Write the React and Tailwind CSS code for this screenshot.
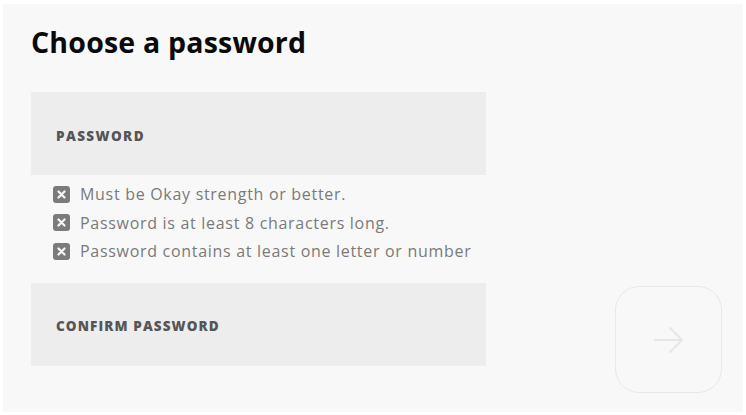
import React from "react";

function XBox() {
  return (
    <span className="flex h-[17px] w-[17px] shrink-0 items-center justify-center rounded-[3px] bg-[#7b7b7b]">
      <svg width="9" height="9" viewBox="0 0 9 9">
        <path d="M1.5 1.5 L7.5 7.5 M7.5 1.5 L1.5 7.5" stroke="#f8f8f8" strokeWidth="2.2" strokeLinecap="round" />
      </svg>
    </span>
  );
}

const rules = [
  "Must be Okay strength or better.",
  "Password is at least 8 characters long.",
  "Password contains at least one letter or number",
];

export default function App() {
  return (
    <div className="h-[415px] w-[746px] bg-white pl-[3px] pt-[4px]" style={{ fontFamily: "'Open Sans', Lato, sans-serif" }}>
      <div className="flex h-[408px] w-[740px] bg-[#f8f8f8]">
        <div className="flex w-[483px] flex-col pl-[28px] pt-[20px]">
          <h1 className="text-[28.5px] font-bold leading-[36px] tracking-[0.2px] text-[#0a0a0a]">Choose a password</h1>
          <div className="mt-[32px] flex h-[83px] w-[455px] items-center bg-[#ededed] px-[25px] pt-[5px]">
            <span className="text-[13.5px] font-extrabold tracking-[1.4px] text-[#555]">PASSWORD</span>
          </div>
          <ul className="mt-[5px] flex flex-col pl-[22px]">
            {rules.map((r) => (
              <li key={r} className="flex h-[28.5px] items-center gap-[10px]">
                <XBox />
                <span className="text-[16px] leading-[20px] tracking-[0.7px] text-[#7a7a7a]">{r}</span>
              </li>
            ))}
          </ul>
          <div className="mt-[17px] flex h-[83px] w-[455px] items-center bg-[#ededed] px-[25px] pt-[5px]">
            <span className="text-[13.5px] font-extrabold tracking-[1.1px] text-[#555]">CONFIRM PASSWORD</span>
          </div>
        </div>
        <div className="flex flex-1 flex-col items-end justify-end pb-[19px] pr-[21px]">
          <button className="flex h-[107px] w-[107px] items-center justify-center rounded-[24px] border border-[#e8e8e8] bg-[#f8f8f8]">
            <svg width="34" height="34" viewBox="0 0 34 34" fill="none">
              <path d="M3 17 H30 M18 5 L30 17 L18 29" stroke="#e6e6e6" strokeWidth="2" strokeLinecap="round" strokeLinejoin="round" />
            </svg>
          </button>
        </div>
      </div>
    </div>
  );
}
